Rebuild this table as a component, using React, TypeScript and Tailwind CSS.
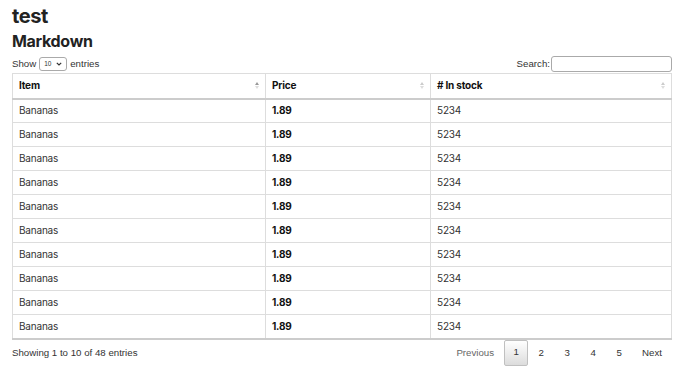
import React from "react";

const rows = Array.from({ length: 10 });

function SortIcon({ active }: { active?: boolean }) {
  return (
    <span className="flex flex-col items-center gap-[1px] leading-none">
      <span className={`block h-0 w-0 border-x-[2.5px] border-b-[3px] border-x-transparent ${active ? "border-b-[#999]" : "border-b-[#ccc]"}`} />
      <span className="block h-0 w-0 border-x-[2.5px] border-t-[3px] border-x-transparent border-t-[#ddd]" />
    </span>
  );
}

const arial = { fontFamily: "'Liberation Sans', Arial, sans-serif" };

export default function App() {
  return (
    <div className="bg-white px-3 pt-[4px] text-[#333]" style={{ fontFamily: "Inter, 'Liberation Sans', sans-serif" }}>
      <h1 className="text-[20px] font-bold leading-[24px] tracking-[-0.02em] text-[#222]">test</h1>
      <h2 className="mt-[4px] text-[16px] font-bold leading-[19px] tracking-[-0.02em] text-[#222]">Markdown</h2>
      <div className="mt-[5px] flex w-[660px] items-center justify-between text-[9.7px] text-[#333]" style={arial}>
        <div className="flex items-center gap-[3px]">
          <span>Show</span>
          <div className="flex h-[14px] w-[28px] items-center justify-between rounded-[3px] border border-[#aaa] px-[4px] text-[6.5px]">
            <span>10</span>
            <svg width="6" height="4" viewBox="0 0 6 4"><path d="M0.8 0.8 L3 3 L5.2 0.8" stroke="#333" strokeWidth="1.2" fill="none" /></svg>
          </div>
          <span>entries</span>
        </div>
        <div className="flex items-center gap-[1px]">
          <span>Search:</span>
          <div className="h-[16px] w-[121px] rounded-[3px] border border-[#aaa]" />
        </div>
      </div>
      <table className="mt-[1px] w-[660px] border-collapse text-[10px] tracking-[-0.02em]">
        <thead>
          <tr className="h-[25px]">
            <th className="w-[253px] border border-b-2 border-[#ddd] border-b-[#ccc] px-[6px] text-left font-bold text-[#111]">
              <div className="flex items-center justify-between"><span>Item</span><SortIcon active /></div>
            </th>
            <th className="w-[165px] border border-b-2 border-[#ddd] border-b-[#ccc] px-[6px] text-left font-bold text-[#111]">
              <div className="flex items-center justify-between"><span>Price</span><SortIcon /></div>
            </th>
            <th className="border border-b-2 border-[#ddd] border-b-[#ccc] px-[6px] text-left font-bold text-[#111]">
              <div className="flex items-center justify-between"><span># In stock</span><SortIcon /></div>
            </th>
          </tr>
        </thead>
        <tbody>
          {rows.map((_, i) => (
            <tr key={i} className={`h-[24px] ${i === 9 ? "border-b-2 border-b-[#ccc]" : ""}`}>
              <td className="border border-[#ddd] px-[6px] text-[#333]">Bananas</td>
              <td className="border border-[#ddd] px-[6px] font-bold text-[#111]">1.89</td>
              <td className="border border-[#ddd] px-[6px] text-[#333]">5234</td>
            </tr>
          ))}
        </tbody>
      </table>
      <div className="mt-0 flex w-[660px] items-center justify-between text-[9.7px] text-[#333]" style={arial}>
        <span className="pt-[1px]">Showing 1 to 10 of 48 entries</span>
        <div className="flex items-center">
          <span className="px-[10px] py-[6px] text-[#666]">Previous</span>
          <span className="flex h-[26px] w-[24px] items-center justify-center rounded-[2px] border border-[#c0c0c0] bg-gradient-to-b from-white to-[#dcdcdc] text-[#333]">1</span>
          <span className="w-[26px] py-[6px] text-center">2</span>
          <span className="w-[26px] py-[6px] text-center">3</span>
          <span className="w-[26px] py-[6px] text-center">4</span>
          <span className="w-[26px] py-[6px] text-center">5</span>
          <span className="px-[10px] py-[6px]">Next</span>
        </div>
      </div>
    </div>
  );
}
